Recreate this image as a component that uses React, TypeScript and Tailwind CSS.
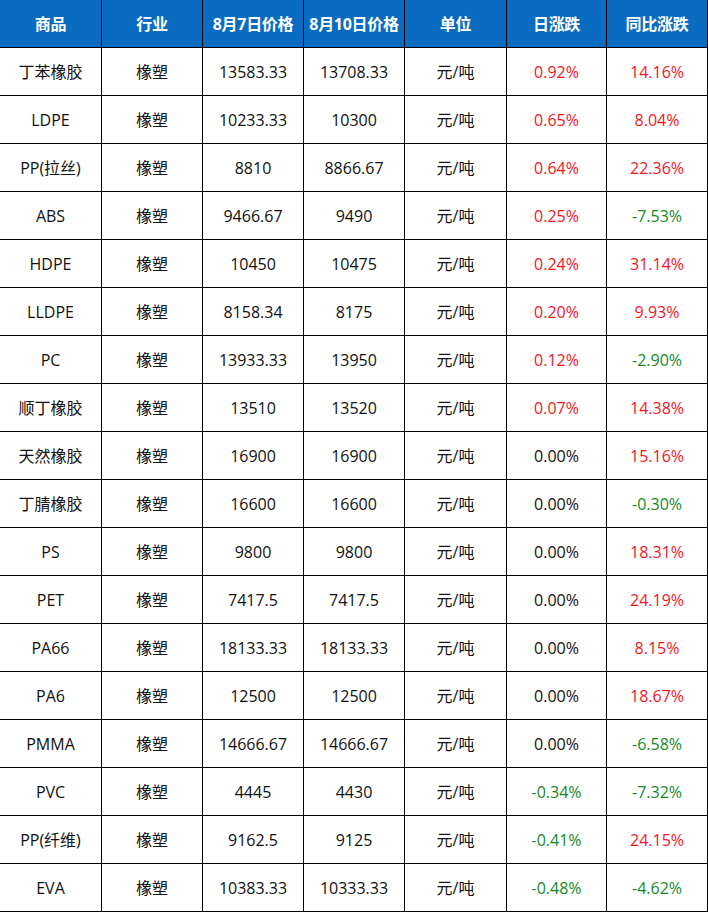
import React from "react";

const rows: [string, string, string, string, string, string][] = [
  ["丁苯橡胶", "13583.33", "13708.33", "元/吨", "0.92%", "14.16%"],
  ["LDPE", "10233.33", "10300", "元/吨", "0.65%", "8.04%"],
  ["PP(拉丝)", "8810", "8866.67", "元/吨", "0.64%", "22.36%"],
  ["ABS", "9466.67", "9490", "元/吨", "0.25%", "-7.53%"],
  ["HDPE", "10450", "10475", "元/吨", "0.24%", "31.14%"],
  ["LLDPE", "8158.34", "8175", "元/吨", "0.20%", "9.93%"],
  ["PC", "13933.33", "13950", "元/吨", "0.12%", "-2.90%"],
  ["顺丁橡胶", "13510", "13520", "元/吨", "0.07%", "14.38%"],
  ["天然橡胶", "16900", "16900", "元/吨", "0.00%", "15.16%"],
  ["丁腈橡胶", "16600", "16600", "元/吨", "0.00%", "-0.30%"],
  ["PS", "9800", "9800", "元/吨", "0.00%", "18.31%"],
  ["PET", "7417.5", "7417.5", "元/吨", "0.00%", "24.19%"],
  ["PA66", "18133.33", "18133.33", "元/吨", "0.00%", "8.15%"],
  ["PA6", "12500", "12500", "元/吨", "0.00%", "18.67%"],
  ["PMMA", "14666.67", "14666.67", "元/吨", "0.00%", "-6.58%"],
  ["PVC", "4445", "4430", "元/吨", "-0.34%", "-7.32%"],
  ["PP(纤维)", "9162.5", "9125", "元/吨", "-0.41%", "24.15%"],
  ["EVA", "10383.33", "10333.33", "元/吨", "-0.48%", "-4.62%"],
];

const headers = ["商品", "行业", "8月7日价格", "8月10日价格", "单位", "日涨跌", "同比涨跌"];

function colorFor(v: string) {
  if (v.startsWith("-")) return "text-[#138a1f]";
  if (v === "0.00%") return "text-[#111]";
  return "text-[#f5141e]";
}

export default function App() {
  const grid =
    "grid grid-cols-[102px_101px_101px_101px_102px_100px_101px] w-[708px]";
  return (
    <div
      className="w-[708px] h-[913px] bg-white"
      style={{ fontFamily: '"Open Sans", "Noto Sans CJK SC", sans-serif' }}
    >
      <div className={grid}>
        {headers.map((h, i) => (
          <div
            key={i}
            className="h-[48px] flex items-center justify-center bg-[#0a6cc0] text-white font-bold text-[16px] border-r border-b border-black tracking-[-0.3px]"
          >
            {h}
          </div>
        ))}
        {rows.map((r, ri) => {
          const cells = [r[0], "橡塑", r[1], r[2], r[3], r[4], r[5]];
          return cells.map((c, ci) => (
            <div
              key={ri + "-" + ci}
              className={`h-[48px] flex items-center justify-center text-[16px] border-r border-b border-black ${
                ci >= 5 ? colorFor(c) : "text-[#111]"
              }`}
            >
              {c}
            </div>
          ));
        })}
      </div>
    </div>
  );
}
